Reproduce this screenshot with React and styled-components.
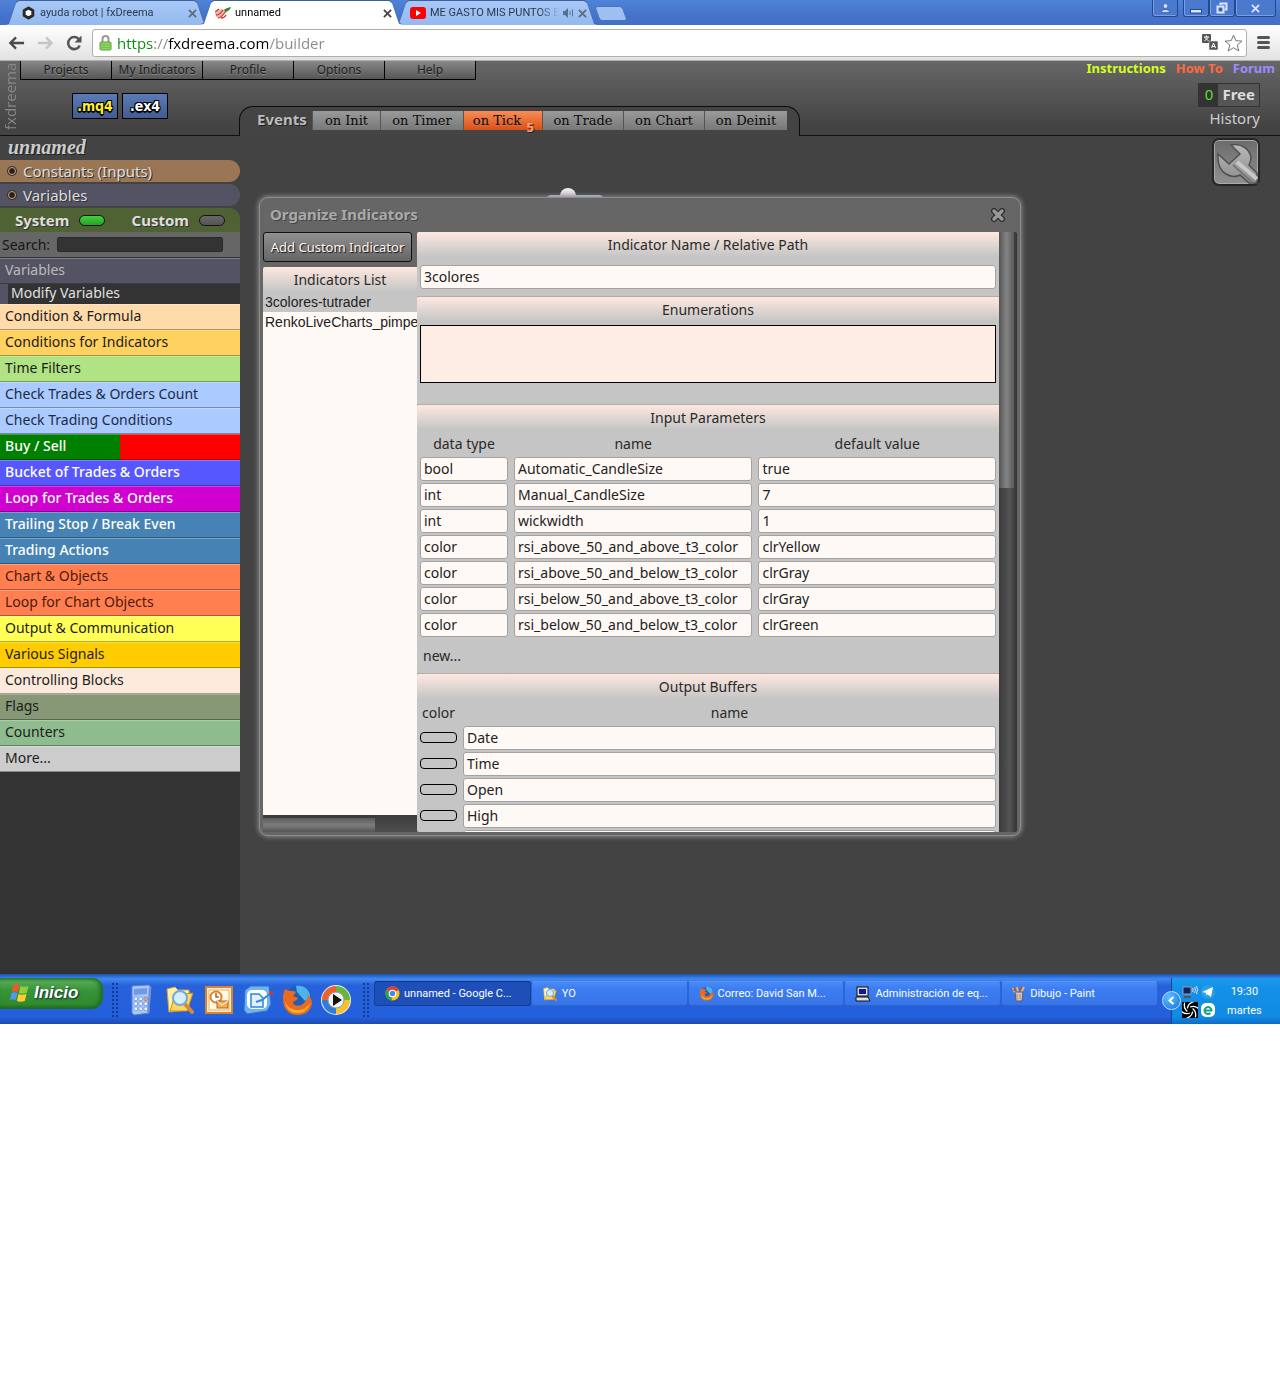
import React from "react";
import styled, { createGlobalStyle, css } from "styled-components";

const ui = '"Noto Sans", sans-serif';
const addressFont = '"Open Sans", sans-serif';
const systemFont = 'Roboto, sans-serif';

const GlobalStyle = createGlobalStyle`
  *, *::before, *::after { box-sizing: border-box; }
  body { margin: 0; background: #fff; font-family: ${ui}; font-size: 14px; }
  button, input, textarea { font: inherit; margin: 0; }
  button { padding: 0; border: 0; background: none; cursor: pointer; }
  a { text-decoration: none; }
  ul { list-style: none; margin: 0; padding: 0; }
  svg { display: block; flex: none; }
`;

/* ---------- browser ---------- */

const TabStrip = styled.div`
  display: flex;
  align-items: flex-end;
  height: 25px;
  padding-left: 6px;
  background: linear-gradient(#4e83d8, #4472c8 70%, #4270ca);
`;
const TabFrame = styled.div`
  flex: 0 1 201px;
  min-width: 0;
  margin-right: -6px;
  position: relative;
  z-index: ${(p) => (p.$active ? 2 : 1)};
  filter: drop-shadow(0 -1px 0 #3a5f9f);
`;
const Tab = styled.div`
  display: flex;
  align-items: center;
  gap: 4px;
  height: 24px;
  padding: 0 10px 0 14px;
  color: ${(p) => (p.$active ? "#000" : "#2b3a52")};
  background: ${(p) => (p.$active ? "#fff" : "linear-gradient(#a8c8f6, #94b9ef)")};
  clip-path: polygon(0 100%, 3px 95%, 10px 8%, 13px 0, calc(100% - 13px) 0, calc(100% - 10px) 8%, calc(100% - 3px) 95%, 100% 100%);
  font: 11px/24px ${systemFont};
`;
const TabTitle = styled.span`
  flex: 1;
  min-width: 0;
  overflow: hidden;
  white-space: nowrap;
  ${(p) => p.$fade && css`mask-image: linear-gradient(to right, #000 85%, transparent);`}
`;
const PlainButton = styled.button`
  display: flex;
  align-items: center;
  justify-content: center;
  color: ${(p) => p.$color || "#555"};
`;
const NewTab = styled.button`
  width: 28px;
  height: 15px;
  margin: 0 0 4px 6px;
  border: 1px solid #4c74b4;
  border-radius: 3px;
  background: #9dc0f3;
  transform: skewX(20deg);
`;
const WindowButtons = styled.div`
  display: flex;
  align-self: flex-start;
  margin-left: auto;
  padding-right: 4px;
`;
const WindowButton = styled.button`
  display: flex;
  align-items: center;
  justify-content: center;
  width: ${(p) => p.$width || 26}px;
  height: 17px;
  margin-right: ${(p) => p.$gap || 0}px;
  border: solid #23488f;
  border-width: 0 1px 1px;
  border-radius: 0 0 3px 3px;
  background: #4a79cd;
  box-shadow: inset 0 -1px #7ba0df, inset 1px 0 #7ba0df;
`;
const Toolbar = styled.div`
  display: flex;
  align-items: center;
  gap: 10px;
  height: 36px;
  padding: 0 10px 0 8px;
  background: linear-gradient(#fff, #e2e2e2);
  border-bottom: 1px solid #b0b0b0;
`;
const NavButtons = styled.div`
  display: flex;
  gap: 12px;
`;
const Omnibox = styled.label`
  flex: 1;
  display: flex;
  align-items: center;
  gap: 5px;
  height: 28px;
  padding: 0 3px 0 6px;
  border: 1px solid #b4b0a8;
  border-radius: 3px;
  background: #fff;
`;
const Address = styled.input`
  flex: 1;
  min-width: 0;
  padding: 0;
  border: 0;
  outline: 0;
  font: 15px/24px ${addressFont};
  color: transparent;
  background: linear-gradient(to right, #0b8a0b 0 37px, #888 37px 51px, #000 51px 151px, #888 151px);
  background-clip: text;
`;

/* ---------- application header ---------- */

const Header = styled.header`
  display: flex;
  height: 75px;
  background: linear-gradient(#666, #434343 90%);
  border-bottom: 1px solid #111;
`;
const Brand = styled.span`
  width: 20px;
  padding: 4px 0 0;
  writing-mode: vertical-rl;
  transform: rotate(180deg);
  color: #888;
  text-align: center;
  font: 15px/20px ${addressFont};
`;
const HeaderMain = styled.div`
  flex: 1;
  display: flex;
  flex-direction: column;
  min-width: 0;
`;
const TopRow = styled.div`
  display: flex;
  justify-content: space-between;
  height: 19px;
`;
const Menu = styled.nav`
  display: flex;
  border-right: 1px solid #000;
`;
const MenuItem = styled.a`
  width: 91px;
  border-left: 1px solid #000;
  border-bottom: 1px solid #000;
  background: linear-gradient(#898989, #565656);
  color: #1c1c1c;
  text-align: center;
  text-shadow: 0 1px #888;
  font: 12px/18px ${ui};
`;
const HelpLinks = styled.nav`
  display: flex;
  gap: 10px;
  padding-right: 5px;
`;
const HelpLink = styled.a`
  color: ${(p) => p.$color};
  font: bold 13px/14px ${ui};
`;
const BottomRow = styled.div`
  flex: 1;
  display: flex;
`;
const Exports = styled.div`
  display: flex;
  gap: 4px;
  width: 219px;
  padding: 13px 0 0 52px;
`;
const ExportButton = styled.button`
  width: 46px;
  height: 26px;
  border: 1px solid #000;
  background: linear-gradient(#5a7bb5, #425d92);
  color: ${(p) => p.$color};
  font: bold 14px/20px "DejaVu Sans Condensed", sans-serif;
  text-shadow: -1px -1px #000, 1px -1px #000, -1px 1px #000, 1px 1px #000, 0 2px 1px #000;
`;
const Events = styled.div`
  display: flex;
  align-items: flex-start;
  align-self: flex-end;
  height: 30px;
  margin-bottom: -1px;
  padding: 4px 12px 0 17px;
  border: 1px solid #0c0c0c;
  border-bottom: 0;
  border-radius: 14px 14px 0 0;
  background: #444;
`;
const EventsTitle = styled.h2`
  width: 55px;
  margin: 0;
  color: #bbb;
  text-shadow: 1px 1px #222;
  font: bold 15px/17px ${ui};
`;
const EventTab = styled.button`
  position: relative;
  width: ${(p) => p.$width}px;
  height: 19px;
  border-left: 1px solid #555;
  background: ${(p) => (p.$active ? "linear-gradient(#f98d57, #dc4f13)" : "linear-gradient(#9a9a9a, #787878)")};
  color: #080808;
  text-shadow: 0 1px #aaa5;
  white-space: nowrap;
  font: 13px/18px "DejaVu Serif", serif;
  ${(p) => p.$active && css`padding-right: 12px;`}
`;
const Count = styled.sub`
  position: absolute;
  right: 8px;
  bottom: -4px;
  color: #f5a070;
  text-shadow: 1px 1px #222;
  font: bold 13px/14px ${ui};
`;
const Account = styled.div`
  display: flex;
  flex-direction: column;
  align-items: flex-end;
  margin-left: auto;
  padding: 3px 20px 0 0;
`;
const Plan = styled.div`
  display: flex;
  height: 24px;
  border: 1px solid #333;
  background: #555;
  color: #ddd;
  font: bold 15px/21px ${ui};
`;
const Credits = styled.span`
  width: 19px;
  background: #333;
  color: #5fdf3f;
  text-align: center;
  font-weight: normal;
`;
const PlanName = styled.span`
  padding: 0 4px;
`;
const History = styled.a`
  color: #ccc;
  font: 15px/22px ${ui};
`;

/* ---------- sidebar ---------- */

const Workspace = styled.main`
  display: flex;
  min-height: 838px;
  background: #434343;
`;
const Sidebar = styled.aside`
  width: 240px;
  flex: none;
  background: #333;
`;
const Project = styled.h1`
  height: 24px;
  margin: 0;
  padding-left: 8px;
  background: #434343;
  color: #ccc;
  text-shadow: 1px 1px #222;
  font: italic bold 20px/22px "Liberation Serif", serif;
`;
const Groups = styled.div`
  display: flex;
  flex-direction: column;
  gap: 2px;
  background: #434343;
`;
const GroupButton = styled.button`
  display: flex;
  align-items: center;
  gap: 7px;
  height: 22px;
  padding-left: 8px;
  border-radius: 0 11px 11px 0;
  background: ${(p) => p.$bg};
  color: #ddd;
  text-shadow: 1px 1px #333;
  font: 15px/22px ${ui};
`;
const Ring = styled.i`
  width: 8px;
  height: 8px;
  border: 1px solid #e0a070;
  border-radius: 50%;
  background: #222;
  box-shadow: 0 0 0 1px #333;
`;
const Libraries = styled.div`
  display: flex;
  justify-content: space-between;
  height: 24px;
  padding: 0 15px;
  border-radius: 0 11px 0 0;
  background: #4f6233;
`;
const Toggle = styled.label`
  display: flex;
  align-items: center;
  gap: 10px;
  color: #ddd;
  text-shadow: 1px 1px #333;
  font: bold 15px/22px ${ui};
  input {
    appearance: none;
    width: 26px;
    height: 11px;
    border: 1px solid #111;
    border-radius: 6px;
    background: linear-gradient(#666, #555);
  }
  input:checked { background: linear-gradient(#3fd03f, #2aa02a); }
`;
const Search = styled.label`
  display: flex;
  align-items: center;
  gap: 7px;
  height: 26px;
  padding: 0 17px 0 2px;
  border-bottom: 1px solid #333;
  background: #666;
  color: #151515;
  font: 14px/24px ${ui};
  input {
    flex: 1;
    min-width: 0;
    height: 15px;
    border: 1px solid #2a2a2a;
    border-radius: 2px;
    background: #333;
    color: #ddd;
  }
`;
const Category = styled.button`
  display: block;
  width: 100%;
  height: 26px;
  padding: 0 0 2px 5px;
  border-top: 1px solid #ffffff40;
  border-bottom: 1px solid #00000050;
  background: ${(p) => p.$bg};
  color: ${(p) => p.$color || "#1c1c1c"};
  text-align: left;
  font: ${(p) => (p.$strong ? 500 : 400)} 14px/22px ${ui};
`;
const SubCategory = styled.button`
  display: block;
  width: 100%;
  height: 20px;
  padding: 0 0 2px 3px;
  border-left: 8px solid #545364;
  background: #333;
  color: #e0e0e0;
  text-align: left;
  font: 14px/18px ${ui};
`;

/* ---------- canvas and dialog ---------- */

const Canvas = styled.section`
  flex: 1;
  position: relative;
  min-width: 0;
  padding: 61px 259px 0 19px;
`;
const ToolsButton = styled.button`
  position: absolute;
  top: 2px;
  right: 20px;
  width: 48px;
  height: 48px;
  border: 2px solid #262626;
  border-radius: 7px;
  background: linear-gradient(#6c6c6c, #909090);
  box-shadow: inset 0 0 0 1px #aaa;
`;
const BlockNode = styled.div`
  position: absolute;
  top: 59px;
  left: 306px;
  width: 58px;
  height: 20px;
  border-radius: 5px;
  background: #b5c3ec;
`;
const Port = styled.i`
  position: absolute;
  top: 52px;
  left: 320px;
  width: 16px;
  height: 16px;
  border-radius: 50%;
  background: linear-gradient(#f3eef5, #b9a9bd);
`;
const Dialog = styled.section`
  position: relative;
  padding: 0 3px 3px;
  border: 1px solid #8c8c8c;
  border-radius: 9px;
  background: #666;
  box-shadow: 0 0 5px 1px #8a8a8a;
`;
const DialogHeader = styled.header`
  display: flex;
  align-items: center;
  justify-content: space-between;
  height: 34px;
  padding: 0 11px 0 7px;
`;
const DialogTitle = styled.h2`
  margin: 0;
  padding-bottom: 2px;
  color: #aaa;
  text-shadow: 1px 1px #444;
  font: bold 15px/32px ${ui};
`;
const DialogBody = styled.div`
  display: grid;
  grid-template-columns: 154px minmax(0, 1fr) 18px;
  height: 600px;
`;
const ListPane = styled.div`
  display: flex;
  flex-direction: column;
  min-height: 0;
  overflow: hidden;
`;
const AddButton = styled.button`
  width: 149px;
  height: 30px;
  margin-bottom: 5px;
  border: 1px solid #111;
  border-radius: 3px;
  background: linear-gradient(#909090, #666);
  color: #fff3ee;
  text-shadow: 1px 1px 1px #111;
  font: 13px/26px ${ui};
`;
const PaneTitle = styled.h3`
  display: block;
  margin: 0;
  height: 26px;
  border-radius: 2px 0 0;
  background: linear-gradient(#fee8e0, #c5c5c5 95%);
  color: #2a2a2a;
  text-align: center;
  font: 14px/26px ${ui};
`;
const IndicatorList = styled.ul`
  flex: 1;
  background: #fff9f5;
`;
const IndicatorItem = styled.button`
  display: block;
  width: 100%;
  height: ${(p) => (p.$selected ? 19 : 20)}px;
  padding-left: 2px;
  background: ${(p) => (p.$selected ? "#c5c5c5" : "transparent")};
  color: #222;
  text-align: left;
  white-space: nowrap;
  font: 14px/19px "Liberation Sans", sans-serif;
`;
const HorizontalTrack = styled.div`
  height: 17px;
  background: linear-gradient(#3b3b3b, #4e4e4e);
`;
const HorizontalThumb = styled.div`
  width: 112px;
  height: 17px;
  border-top: 3px solid #3c3c3c;
  background: linear-gradient(#5a5a5a, #7d7d7d 50%, #555);
`;
const VerticalTrack = styled.div`
  border-radius: 0 2px 2px 0;
  background: linear-gradient(to right, #3b3b3b, #555 60%, #333);
`;
const VerticalThumb = styled.div`
  width: 15px;
  height: 256px;
  background: linear-gradient(to right, #555, #838383 50%, #5a5a5a);
`;
const Details = styled.form`
  min-height: 0;
  overflow: hidden;
  border-radius: 2px 0 0 2px;
  background: #c5c5c5;
`;
const Section = styled.section`
  & + & { border-top: 1px solid #b7aba6; }
`;
const Fields = styled.div`
  padding: ${(p) => p.$pad};
`;
const Enumerations = styled.textarea`
  display: block;
  width: 100%;
  height: 58px;
  border: 1px solid #000;
  background: #feede5;
  resize: none;
`;
const Grid = styled.table`
  width: 100%;
  table-layout: fixed;
  border-collapse: collapse;
  th {
    height: 25px;
    padding: 0;
    color: #2a2a2a;
    font: 14px/25px ${ui};
  }
  td { height: 26px; padding: 1px 3px; vertical-align: top; }
`;
const Field = styled.input`
  display: block;
  width: 100%;
  height: 24px;
  padding: 0 3px 1px;
  border: 1px solid #a2a2a2;
  border-radius: 3px;
  background: #fff9f5;
  color: #222;
  font: 14px/21px ${ui};
`;
const NewRow = styled.button`
  display: block;
  height: 35px;
  padding-left: 6px;
  color: #2a2a2a;
  font: 14px/33px ${ui};
`;
const Swatch = styled.button`
  display: block;
  width: 37px;
  height: 11px;
  margin-top: 6px;
  border: 1px solid #000;
  border-radius: 4px;
`;

/* ---------- taskbar ---------- */

const Taskbar = styled.footer`
  display: flex;
  align-items: flex-start;
  height: 50px;
  padding-top: 4px;
  background: linear-gradient(#1b50b8, #4189ef 10%, #2862da 22%, #245fdc 85%, #1c4cb4);
`;
const StartButton = styled.button`
  display: flex;
  align-items: center;
  gap: 5px;
  width: 103px;
  height: 31px;
  padding: 0 0 2px 10px;
  border-radius: 0 10px 12px 0;
  background: linear-gradient(#2f8a30, #55a855 12%, #389438 40%, #308a30 85%, #1f6a22);
  box-shadow: inset -3px 0 4px #1e6a24;
  color: #fff;
  text-shadow: 1px 1px 2px #123;
  font: italic bold 17px/28px "Liberation Sans", sans-serif;
`;
const Grip = styled.i`
  width: 6px;
  height: 36px;
  margin: 5px ${(p) => p.$right}px 0 ${(p) => p.$left}px;
  background: radial-gradient(circle at 1px 1px, #123c94 1px, transparent 1px) 0 0 / 4px 4px;
`;
const QuickLaunch = styled.div`
  display: flex;
  gap: 7px;
  padding-top: 6px;
  width: 238px;
`;
const Tasks = styled.div`
  flex: 1;
  display: flex;
  min-width: 0;
  padding-top: 3px;
`;
const Task = styled.button`
  flex: 1 1 0;
  display: flex;
  align-items: center;
  gap: 4px;
  min-width: 0;
  height: 25px;
  padding: 0 10px;
  border: 1px solid ${(p) => (p.$active ? "#163f92" : "#2c64d0")};
  border-top-color: ${(p) => (p.$active ? "#12367f" : "#5a94f8")};
  border-radius: 3px;
  background: ${(p) => (p.$active ? "#1e4fb8" : "linear-gradient(#4a8af8, #3b7df2 30%, #3874e8)")};
  color: #fff;
  white-space: nowrap;
  font: 11px/20px ${systemFont};
`;
const Tray = styled.div`
  position: relative;
  display: flex;
  align-items: center;
  gap: 11px;
  width: 109px;
  height: 46px;
  margin-left: 13px;
  padding-left: 10px;
  border-left: 1px solid #0c4aa0;
  background: linear-gradient(#1a9cf0, #1590e8 20%, #118ae4 85%, #0c6cc4);
  color: #fff;
`;
const TrayToggle = styled.button`
  position: absolute;
  top: 13px;
  left: -10px;
  display: flex;
  align-items: center;
  justify-content: center;
  width: 19px;
  height: 19px;
  border: 1px solid #bfe0ff;
  border-radius: 50%;
  background: radial-gradient(circle at 35% 30%, #5cc0ff, #1a6ee0);
`;
const TrayIcons = styled.div`
  display: grid;
  grid-template-columns: 16px 16px;
  gap: 2px;
`;
const Clock = styled.time`
  display: flex;
  flex-direction: column;
  align-items: center;
  font: 11px/19px ${systemFont};
`;

/* ---------- drawings ---------- */

const Cross = ({ size = 9, color = "#5f6b7c", width = 2 }) => (
  <svg width={size} height={size} viewBox="0 0 10 10" stroke={color} strokeWidth={width}><path d="M1 1l8 8M9 1l-8 8" /></svg>
);
const Hexagon = () => (
  <svg width="16" height="14" viewBox="-2 0 16 14"><path d="M6.500 2l4.300 2.500v5l-4.300 2.500-4.300-2.500v-5z" fill="#fff" stroke="#2b2b2b" strokeWidth="3" strokeLinejoin="round" /></svg>
);
const Leaf = () => (
  <svg width="16" height="13" viewBox="0 0 16 13">
    <path d="M0 6c1-3 4-4 6-4l4 1c1 4-5 9-9 7" fill="#efb3aa" />
    <path d="M1 8c2 0 5-2 7-5M0 5l4-3M3 11c3 0 6-4 8-7M6 11c2 0 4-1 5-3" stroke="#d83a2b" strokeWidth="1.300" fill="none" />
    <path d="M9 3c2-2 4-2 7-3-1 3-3 4-5 5z" fill="#2f7f39" />
  </svg>
);
const Tube = () => (
  <svg width="16" height="12" viewBox="0 0 16 12"><rect width="16" height="12" rx="3" fill="#f00" /><path d="M6 3l5 3-5 3z" fill="#fff" /></svg>
);
const Speaker = () => (
  <svg width="11" height="10" viewBox="0 0 11 10"><path d="M0 3h2l3-3v10l-3-3h-2z" fill="#56708f" /><path d="M7 3v4M9.500 1.500v7" stroke="#56708f" /></svg>
);
const Arrow = ({ color, flip }) => (
  <svg width="17" height="16" viewBox="0 0 18 16" fill="none" stroke={color} strokeWidth="2.500">
    <path d={flip ? "M1 8h14M9.500 2l6 6-6 6" : "M17 8h-14M8.500 2l-6 6 6 6"} />
  </svg>
);
const Reload = () => (
  <svg width="16" height="16" viewBox="0 0 16 16"><path d="M13 4.500a6 6 0 1 0 .7 6" fill="none" stroke="#555" strokeWidth="2.500" /><path d="M15.500.5v7h-7z" fill="#555" /></svg>
);
const Lock = () => (
  <svg width="13" height="16" viewBox="0 0 13 16"><path d="M3.500 8v-4a3 3 0 0 1 6 0v4" fill="none" stroke="#999" strokeWidth="2" /><rect x="1" y="7" width="11" height="8" rx="1" fill="#8dd55f" stroke="#5aa23a" /><path d="M2 10h9M2 12.500h9" stroke="#74c04b" /></svg>
);
const Translate = () => (
  <svg width="17" height="17" viewBox="0 0 17 17"><rect width="9" height="9" rx="1" fill="#555" /><rect x="7" y="7" width="9" height="9" rx="1" fill="#555" stroke="#fff" strokeWidth=".5" /><path d="M2 3h5M4.500 1.500v1.500M2.500 7l4-4M6.500 7l-4-4M9.500 14l2-5 2 5M10 12.500h3" stroke="#fff" fill="none" /></svg>
);
const Star = () => (
  <svg width="19" height="18" viewBox="0 0 19 18"><path d="M9.500 1l2.300 5.700 6.200.4-4.800 3.900 1.600 6-5.300-3.300-5.300 3.300 1.600-6-4.800-3.900 6.200-.4z" fill="#fff" stroke="#777" /></svg>
);
const Bars = () => (
  <svg width="13" height="13" viewBox="0 0 13 13" stroke="#555" strokeWidth="3" strokeLinecap="round"><path d="M1.500 1.500h10M1.500 6.500h10M1.500 11.500h10" /></svg>
);
const Person = () => (
  <svg width="9" height="10" viewBox="0 0 9 10" fill="#cfe0ff" stroke="#234a90" strokeWidth=".6"><path d="M.5 9.500c0-4 8-4 8 0z" /><circle cx="4.500" cy="3" r="2.400" /></svg>
);
const Minimize = () => (
  <svg width="12" height="12" viewBox="0 0 12 12"><rect x=".5" y="7.500" width="11" height="3.500" fill="#dbe7ff" stroke="#234a90" /></svg>
);
const Restore = () => (
  <svg width="12" height="12" viewBox="0 0 12 12" fill="none"><path d="M4.500 3v-1.500h6v6h-2" stroke="#dbe7ff" strokeWidth="2" /><rect x="1.500" y="4.500" width="6" height="6" stroke="#dbe7ff" strokeWidth="2" /><rect x="3.500" y="6.500" width="2" height="2" fill="#234a90" /></svg>
);
const Wrench = () => (
  <svg width="44" height="44" viewBox="0 0 44 44">
    <defs>
      <linearGradient id="steel" x1="0" y1="0" x2="0" y2="1"><stop offset="0" stopColor="#b8b8b8" /><stop offset="1" stopColor="#8d8d8d" /></linearGradient>
    </defs>
    <path d="M4 14l11 10 11-10-9-9c9-2 19 3 20 13 0 3-1 5-2 7l8 8v10h-8l-9-8c-8 4-22-1-22-17z" fill="url(#steel)" stroke="#505050" strokeWidth="1.500" />
    <path d="M23 22l20 17" stroke="#c8c8c8" strokeWidth="4" />
    <path d="M19 25l20 18" stroke="#777" strokeWidth="2" />
  </svg>
);
const CloseMark = () => (
  <svg width="16" height="16" viewBox="0 0 16 16" strokeLinecap="round"><path d="M4 4l8 8M12 4l-8 8" stroke="#2b2b2b" strokeWidth="6" /><path d="M4 4l8 8M12 4l-8 8" stroke="#999" strokeWidth="3.500" /></svg>
);
const WindowsFlag = () => (
  <svg width="19" height="19" viewBox="0 0 19 19">
    <path d="M3.500 2c2-2 4-1 6 0l-1.700 7c-2-1-4-1-6 0z" fill="#f0582a" />
    <path d="M10.500 3c2 1 5 1 8 0l-1.700 7c-3 1-6 1-8 0z" fill="#8ccf3c" />
    <path d="M1.500 10c2-1 4-1 6 0l-1.700 7c-2-1-4-1-5.600 0z" fill="#4a9df5" />
    <path d="M8.500 11c2 1 5 1 8 0l-1.700 7c-3 1-6 1-8 0z" fill="#ffd02f" />
  </svg>
);
const Calculator = () => (
  <svg width="32" height="32" viewBox="0 0 32 32">
    <path d="M7 2l17-1 2 2-2 26-15 2-2-2z" fill="#a9c6f4" stroke="#5d83cc" />
    <path d="M9 5l13-1v6l-13 1z" fill="#6d9be8" />
    <path d="M24 2l2 2-2 25-2 1z" fill="#6f93d4" />
    {[13, 18, 23].map((y) => [9, 14, 19].map((x) => (
      <rect key={`${x}-${y}`} x={x} y={y} width="3.500" height="3.500" rx="1" fill={x === 19 && y === 13 ? "#f2a077" : "#e8f1ff"} stroke="#5d83cc" strokeWidth=".6" />
    )))}
  </svg>
);
const FolderSearch = ({ size = 32 }) => (
  <svg width={size} height={size} viewBox="0 0 32 32">
    <path d="M3 5l8-2 3 3h11v20l-20 2z" fill="#fff2ad" stroke="#d8a62a" />
    <path d="M6 27l5-16 18-2-6 18z" fill="#ffd75c" stroke="#c98e1e" />
    <path d="M21 20l7 8" stroke="#d98a33" strokeWidth="4" strokeLinecap="round" />
    <circle cx="16" cy="14" r="7" fill="#d6efff" stroke="#75a7d8" strokeWidth="2" />
  </svg>
);
const Outlook = () => (
  <svg width="32" height="32" viewBox="0 0 32 32">
    <rect x="3" y="3" width="26" height="26" fill="#fff0c9" stroke="#d9822b" strokeWidth="2" />
    <rect x="6" y="6" width="20" height="20" fill="#fff9e8" stroke="#eab069" />
    <circle cx="13" cy="13" r="5.500" fill="#fff" stroke="#d9822b" strokeWidth="2" />
    <path d="M13 9v4h3" fill="none" stroke="#b5611c" strokeWidth="1.500" />
    <rect x="14" y="17" width="11" height="7" fill="#f2b04e" stroke="#b5611c" /><path d="M14 17l5 4 6-4" fill="none" stroke="#fff" />
  </svg>
);
const ShowDesktop = () => (
  <svg width="32" height="32" viewBox="0 0 32 32">
    <path d="M3 6l6-4h18l2 18-4 7-20 3-3-4z" fill="#6fb4f2" stroke="#2c6fd0" />
    <rect x="5" y="6" width="20" height="19" rx="5" fill="#fff" />
    <path d="M9 10h8l4 4v9h-12z" fill="#dff0ff" stroke="#2c86d6" strokeWidth="1.500" />
    <path d="M14 18l6-2 10-8" fill="none" stroke="#3c88cf" strokeWidth="2" /><circle cx="29" cy="9" r="2" fill="#d33" />
  </svg>
);
const Firefox = ({ size = 32 }) => (
  <svg width={size} height={size} viewBox="0 0 32 32">
    <circle cx="17" cy="15" r="13" fill="#1d5fb8" /><path d="M15 2c8-2 15 5 14 12l-5 3-8-9z" fill="#4cb6ec" />
    <path d="M4 5c2 1 4 2 7 2 1 0 3 0 4 1l-3 4 5 2c-1 3-5 3-5 5 2 4 10 4 13-3 2 1 2-3 1-6 5 4 6 9 4 13-3 7-9 8-14 8-13 0-17-15-12-26z" fill="#ea6b1f" />
    <path d="M4 18c4 9 18 12 25 1-2 8-8 11-14 10-6 0-10-5-11-11z" fill="#f9ae2b" />
  </svg>
);
const MediaPlayer = () => (
  <svg width="32" height="32" viewBox="0 0 32 32">
    <circle cx="16" cy="16" r="15" fill="#e8eef6" />
    <path d="M16 16V2A14 14 0 0 0 2 16z" fill="#f0602b" /><path d="M16 16h14A14 14 0 0 0 16 2z" fill="#67b634" />
    <path d="M16 16v14a14 14 0 0 0 14-14z" fill="#f6c22a" /><path d="M16 16H2a14 14 0 0 0 14 14z" fill="#2f7be0" />
    <circle cx="16" cy="16" r="8" fill="#f4f4f4" stroke="#999" /><path d="M13 10l9 6-9 6z" fill="#111" />
  </svg>
);
const ChromeIcon = () => (
  <svg width="15" height="15" viewBox="0 0 32 32">
    <circle cx="16" cy="16" r="15" fill="#fbc116" /><path d="M16 16L3 8.500a15 15 0 0 1 26 0z" fill="#e33b2e" />
    <path d="M16 16l-2 15A15 15 0 0 1 3 8.500z" fill="#2ba24c" /><circle cx="16" cy="16" r="7" fill="#4286f5" stroke="#fff" strokeWidth="2.500" />
  </svg>
);
const Computer = () => (
  <svg width="16" height="16" viewBox="0 0 16 16"><rect x="2" y="1" width="11" height="9" fill="#ddd" stroke="#111" /><rect x="4" y="3" width="7" height="5" fill="#0a1b9a" /><path d="M1 11h12l2 4H1z" fill="#ddd" stroke="#111" /></svg>
);
const Paint = () => (
  <svg width="14" height="16" viewBox="0 0 14 16"><path d="M3 7l-2-5M6 7l-1-6M9 7l3-6" stroke="#e7b75c" strokeWidth="2" /><path d="M2 5l1-3M8 4l1-3" stroke="#d63b2b" strokeWidth="1.500" /><path d="M3 6h8l-1 9h-6z" fill="#c2cbd0" stroke="#657" /><path d="M5 8v6M8 8v5" stroke="#dd7d2b" /></svg>
);
const Network = () => (
  <svg width="16" height="16" viewBox="0 0 16 16" fill="none"><rect x="1" y="3" width="8" height="7" fill="#14245a" stroke="#99a" /><path d="M2 13h7" stroke="#555" strokeWidth="2" /><path d="M10.500 4q1.500 2 0 4M12.500 3q2 3 0 6M14.500 2q2 4 0 8" stroke="#dde" /></svg>
);
const Plane = () => (
  <svg width="16" height="16" viewBox="0 0 16 16"><circle cx="8" cy="8" r="7" fill="#2ba0dd" /><path d="M2 8l11-5-2 10-4-3-1 2v-3z" fill="#fff" /></svg>
);
const Swirl = () => (
  <svg width="16" height="16" viewBox="0 0 16 16"><rect width="16" height="16" fill="#000" /><g fill="none" stroke="#fff" strokeWidth="1.300">{[0, 60, 120, 180, 240, 300].map((a) => <path key={a} d="M8 5q5-2 9 2" transform={`rotate(${a} 8 8)`} />)}</g></svg>
);
const Browser = () => (
  <svg width="16" height="16" viewBox="0 0 16 16"><rect x="1" y="1" width="14" height="14" rx="5" fill="#fff" /><path d="M4.500 8.500h7a3.500 3.500 0 1 0-1 2.500" fill="none" stroke="#18a08f" strokeWidth="2" /></svg>
);

/* ---------- data ---------- */

const events = [["on Init", 68], ["on Timer", 83], ["on Tick", 79, 5], ["on Trade", 81], ["on Chart", 81], ["on Deinit", 83]];

const categories = [
  ["Condition & Formula", "#ffdba9"],
  ["Conditions for Indicators", "#ffd15f"],
  ["Time Filters", "#afe383"],
  ["Check Trades & Orders Count", "#abcaff", "#1d2a45"],
  ["Check Trading Conditions", "#abcaff", "#1d2a45"],
  ["Buy / Sell", "linear-gradient(to right, #008000 50%, #f00 50%)", "#fff"],
  ["Bucket of Trades & Orders", "#5757ff", "#fff"],
  ["Loop for Trades & Orders", "#d000d0", "#fff"],
  ["Trailing Stop / Break Even", "#4682b4", "#fff"],
  ["Trading Actions", "#4682b4", "#fff"],
  ["Chart & Objects", "#ff7f50", "#4a1c0c"],
  ["Loop for Chart Objects", "#ff7f50", "#4a1c0c"],
  ["Output & Communication", "#ffff55"],
  ["Various Signals", "#ffcc00"],
  ["Controlling Blocks", "#feeadd"],
  ["Flags", "#879877"],
  ["Counters", "#8fbc8f"],
  ["More...", "#ccc"],
];

const parameters = [
  ["bool", "Automatic_CandleSize", "true"],
  ["int", "Manual_CandleSize", "7"],
  ["int", "wickwidth", "1"],
  ["color", "rsi_above_50_and_above_t3_color", "clrYellow"],
  ["color", "rsi_above_50_and_below_t3_color", "clrGray"],
  ["color", "rsi_below_50_and_above_t3_color", "clrGray"],
  ["color", "rsi_below_50_and_below_t3_color", "clrGreen"],
];

const buffers = ["Date", "Time", "Open", "High", ""];

const quickLaunch = [
  [Calculator, "Calculator"],
  [FolderSearch, "Search"],
  [Outlook, "Outlook"],
  [ShowDesktop, "Show desktop"],
  [Firefox, "Firefox"],
  [MediaPlayer, "Media player"],
];

const tasks = [
  [<ChromeIcon />, "unnamed - Google C..."],
  [<FolderSearch size={16} />, "YO"],
  [<Firefox size={15} />, "Correo: David San M..."],
  [<Computer />, "Administración de eq..."],
  [<Paint />, "Dibujo - Paint"],
];

function BrowserChrome() {
  return (
    <>
      <TabStrip>
        <TabFrame><Tab><Hexagon /><TabTitle>ayuda robot | fxDreema</TabTitle><PlainButton aria-label="Close tab"><Cross /></PlainButton></Tab></TabFrame>
        <TabFrame $active><Tab $active><Leaf /><TabTitle>unnamed</TabTitle><PlainButton aria-label="Close tab"><Cross color="#444" /></PlainButton></Tab></TabFrame>
        <TabFrame><Tab><Tube /><TabTitle $fade>ME GASTO MIS PUNTOS E</TabTitle><Speaker /><PlainButton aria-label="Close tab"><Cross /></PlainButton></Tab></TabFrame>
        <NewTab aria-label="New tab" />
        <WindowButtons>
          <WindowButton $gap={5} aria-label="User"><Person /></WindowButton>
          <WindowButton aria-label="Minimize"><Minimize /></WindowButton>
          <WindowButton aria-label="Restore"><Restore /></WindowButton>
          <WindowButton $width={41} aria-label="Close"><Cross color="#dbe7ff" width={2} /></WindowButton>
        </WindowButtons>
      </TabStrip>
      <Toolbar>
        <NavButtons>
          <PlainButton aria-label="Back"><Arrow color="#4a4a4a" /></PlainButton>
          <PlainButton aria-label="Forward"><Arrow color="#c6c6c6" flip /></PlainButton>
          <PlainButton aria-label="Reload"><Reload /></PlainButton>
        </NavButtons>
        <Omnibox>
          <Lock />
          <Address aria-label="Address" defaultValue="https://fxdreema.com/builder" />
          <Translate />
          <Star />
        </Omnibox>
        <PlainButton aria-label="Menu"><Bars /></PlainButton>
      </Toolbar>
    </>
  );
}

function AppHeader() {
  return (
    <Header>
      <Brand>fxdreema</Brand>
      <HeaderMain>
        <TopRow>
          <Menu>
            {["Projects", "My Indicators", "Profile", "Options", "Help"].map((m) => <MenuItem key={m} href="#">{m}</MenuItem>)}
          </Menu>
          <HelpLinks>
            <HelpLink href="#" $color="#d4ff1f">Instructions</HelpLink>
            <HelpLink href="#" $color="#ff6a40">How To</HelpLink>
            <HelpLink href="#" $color="#9c8cff">Forum</HelpLink>
          </HelpLinks>
        </TopRow>
        <BottomRow>
          <Exports>
            <ExportButton $color="#ffee33">.mq4</ExportButton>
            <ExportButton $color="#fff">.ex4</ExportButton>
          </Exports>
          <Events>
            <EventsTitle>Events</EventsTitle>
            {events.map(([name, width, count]) => (
              <EventTab key={name} $width={width} $active={!!count}>{name}{count && <Count>{count}</Count>}</EventTab>
            ))}
          </Events>
          <Account>
            <Plan><Credits>0</Credits><PlanName>Free</PlanName></Plan>
            <History href="#">History</History>
          </Account>
        </BottomRow>
      </HeaderMain>
    </Header>
  );
}

function BlockLibrary() {
  return (
    <Sidebar>
      <Project>unnamed</Project>
      <Groups>
        <GroupButton $bg="#9b7654"><Ring />Constants (Inputs)</GroupButton>
        <GroupButton $bg="#545364"><Ring />Variables</GroupButton>
        <Libraries>
          <Toggle>System<input type="checkbox" defaultChecked /></Toggle>
          <Toggle>Custom<input type="checkbox" /></Toggle>
        </Libraries>
      </Groups>
      <Search>Search:<input type="text" /></Search>
      <Category $bg="#545364" $color="#bbb">Variables</Category>
      <SubCategory>Modify Variables</SubCategory>
      {categories.map(([name, bg, color]) => (
        <Category key={name} $bg={bg} $color={color} $strong={color === "#fff"}>{name}</Category>
      ))}
    </Sidebar>
  );
}

function IndicatorDialog() {
  return (
    <Dialog role="dialog" aria-labelledby="dialog-title">
      <DialogHeader>
        <DialogTitle id="dialog-title">Organize Indicators</DialogTitle>
        <PlainButton aria-label="Close"><CloseMark /></PlainButton>
      </DialogHeader>
      <DialogBody>
        <ListPane>
          <AddButton>Add Custom Indicator</AddButton>
          <PaneTitle>Indicators List</PaneTitle>
          <IndicatorList>
            <li><IndicatorItem $selected>3colores-tutrader</IndicatorItem></li>
            <li><IndicatorItem>RenkoLiveCharts_pimpe</IndicatorItem></li>
          </IndicatorList>
          <HorizontalTrack><HorizontalThumb /></HorizontalTrack>
        </ListPane>
        <Details>
          <Section>
            <PaneTitle as="label" htmlFor="indicator-name">Indicator Name / Relative Path</PaneTitle>
            <Fields $pad="7px 3px"><Field id="indicator-name" defaultValue="3colores" /></Fields>
          </Section>
          <Section>
            <PaneTitle>Enumerations</PaneTitle>
            <Fields $pad="2px 3px 21px"><Enumerations aria-label="Enumerations" /></Fields>
          </Section>
          <Section>
            <PaneTitle>Input Parameters</PaneTitle>
            <Grid>
              <colgroup><col width="94" /><col width="42%" /><col /></colgroup>
              <thead><tr><th>data type</th><th>name</th><th>default value</th></tr></thead>
              <tbody>
                {parameters.map((row) => (
                  <tr key={row[1]}>
                    {row.map((value, i) => <td key={i}><Field aria-label={["data type", "name", "default value"][i]} defaultValue={value} /></td>)}
                  </tr>
                ))}
              </tbody>
            </Grid>
            <NewRow type="button">new...</NewRow>
          </Section>
          <Section>
            <PaneTitle>Output Buffers</PaneTitle>
            <Grid>
              <colgroup><col width="43" /><col /></colgroup>
              <thead><tr><th>color</th><th>name</th></tr></thead>
              <tbody>
                {buffers.map((name) => (
                  <tr key={name}>
                    <td><Swatch type="button" aria-label="Buffer color" /></td>
                    <td><Field aria-label="name" defaultValue={name} /></td>
                  </tr>
                ))}
              </tbody>
            </Grid>
          </Section>
        </Details>
        <VerticalTrack><VerticalThumb /></VerticalTrack>
      </DialogBody>
    </Dialog>
  );
}

function DesktopTaskbar() {
  return (
    <Taskbar>
      <StartButton><WindowsFlag />Inicio</StartButton>
      <Grip $left={9} $right={7} />
      <QuickLaunch>
        {quickLaunch.map(([Icon, label]) => (
          <PlainButton key={label} aria-label={label}><Icon /></PlainButton>
        ))}
      </QuickLaunch>
      <Grip $left={0} $right={5} />
      <Tasks>
        {tasks.map(([icon, title], i) => <Task key={title} $active={i === 0}>{icon}{title}</Task>)}
      </Tasks>
      <Tray>
        <TrayToggle aria-label="Hide icons">
          <svg width="7" height="9" viewBox="0 0 7 9" fill="none" stroke="#fff" strokeWidth="2"><path d="M5.500 1l-4 3.500 4 3.500" /></svg>
        </TrayToggle>
        <TrayIcons><Network /><Plane /><Swirl /><Browser /></TrayIcons>
        <Clock><span>19:30</span><span>martes</span></Clock>
      </Tray>
    </Taskbar>
  );
}

export default function App() {
  return (
    <>
      <GlobalStyle />
      <BrowserChrome />
      <AppHeader />
      <Workspace>
        <BlockLibrary />
        <Canvas>
          <BlockNode />
          <Port />
          <ToolsButton aria-label="Tools"><Wrench /></ToolsButton>
          <IndicatorDialog />
        </Canvas>
      </Workspace>
      <DesktopTaskbar />
    </>
  );
}
